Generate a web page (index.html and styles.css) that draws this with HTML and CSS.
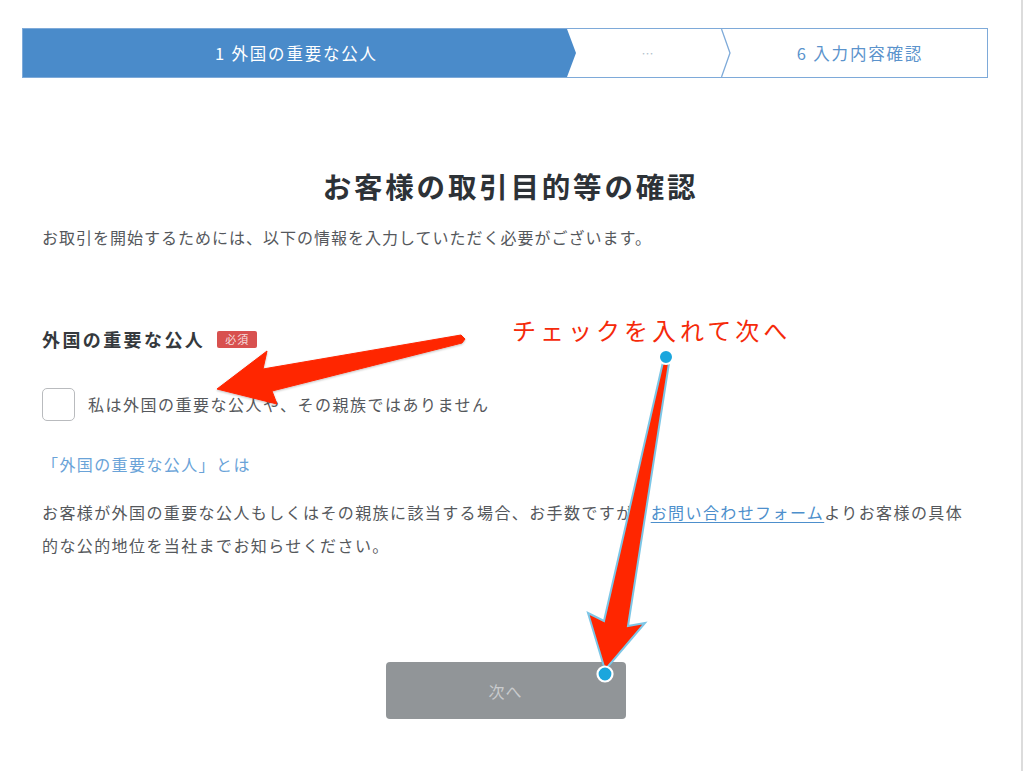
FILE: index.html
```html
<!DOCTYPE html>
<html lang="ja">
<head>
<meta charset="utf-8">
<title>お客様の取引目的等の確認</title>
<link rel="stylesheet" href="styles.css">
</head>
<body>
<div class="page">
  <div class="stepper">
    <div class="step step-active">1 外国の重要な公人</div>
    <div class="step step-mid">…</div>
    <svg class="chev" viewBox="0 0 10 48" preserveAspectRatio="none"><polyline points="0.5,0 9,24 0.5,48" fill="none" stroke="#7eaad9" stroke-width="1.3"/></svg>
    <div class="step step-last">6 入力内容確認</div>
  </div>

  <main class="content">
    <h1 class="title">お客様の取引目的等の確認</h1>
    <p class="lead">お取引を開始するためには、以下の情報を入力していただく必要がございます。</p>

    <div class="field-head">
      <span class="field-label">外国の重要な公人</span>
      <span class="badge">必須</span>
    </div>

    <label class="check-row">
      <span class="checkbox"></span>
      <span class="check-text">私は外国の重要な公人や、その親族ではありません</span>
    </label>

    <a class="info-link">「外国の重要な公人」とは</a>

    <p class="note"><span>お客様が外国の重要な公人もしくはその親族に該当する場合、お手数ですが、</span><a class="inline-link">お問い合わせフォーム</a><span>よりお客様の具体</span><span>的な公的地位を当社までお知らせください。</span></p>

    <div class="actions">
      <button class="next-btn" type="button">次へ</button>
    </div>
  </main>

  <div class="annotation-text">チェックを入れて次へ</div>

  <svg class="overlay" viewBox="0 0 1024 771" width="1024" height="771">
    <defs>
      <filter id="sh" x="-10%" y="-10%" width="120%" height="140%">
        <feDropShadow dx="0" dy="1" stdDeviation="1.2" flood-color="#000" flood-opacity="0.25"/>
      </filter>
    </defs>
    <polygon filter="url(#sh)" fill="#ff2600" stroke="#ff2600" stroke-width="1" stroke-linejoin="round"
      points="217,389 267,351 263,369 461,335 465,339 462,343 272,391 277,404"/>
    <polygon fill="#ff2600" stroke="#7cc6e6" stroke-width="2" stroke-linejoin="miter"
      points="663,362 669,363 628,626 645,623 605,670 588,613 604,621"/>
    <circle cx="666" cy="357" r="7" fill="#1ba6dd" stroke="#fff" stroke-width="2"/>
    <circle cx="605" cy="674" r="7.5" fill="#1ba6dd" stroke="#fff" stroke-width="2.2"/>
  </svg>
</div>
</body>
</html>
```

FILE: styles.css
```css
* { box-sizing: border-box; }

html, body {
  margin: 0;
  padding: 0;
  background: #ffffff;
}

body {
  font-family: "Noto Sans CJK JP", "Noto Sans", sans-serif;
  color: #4a4d52;
}

.page {
  position: relative;
  width: 1023px;
  height: 771px;
  border-right: 2px solid #dcdcdc;
  padding-top: 28px;
  overflow: hidden;
}

/* stepper */
.stepper {
  display: flex;
  margin-left: 22px;
  width: 966px;
  height: 50px;
  border: 1px solid #7eaad9;
}

.step {
  display: flex;
  align-items: center;
  justify-content: center;
  font-size: 16.5px;
  letter-spacing: 1.8px;
  height: 100%;
}

.step-active {
  width: 553px;
  background: #4a8bca;
  color: #ffffff;
  clip-path: polygon(0 0, calc(100% - 9px) 0, 100% 50%, calc(100% - 9px) 100%, 0 100%);
  padding-right: 6px;
}

.step-mid {
  width: 145px;
  color: #b3bfcc;
  font-size: 12px;
}

.chev {
  width: 10px;
  height: 100%;
  display: block;
}

.step-last {
  flex: 1;
  color: #5b93cc;
  padding-left: 2px;
}

/* content */
.content {
  padding: 0 42px;
}

.title {
  margin: 88px 0 0;
  text-align: center;
  font-size: 28.5px;
  line-height: 40px;
  letter-spacing: 2.8px;
  font-weight: 700;
  color: #2d3237;
}

.lead {
  margin: 19px 0 0;
  font-size: 16px;
  line-height: 24px;
  letter-spacing: 1px;
  color: #55585c;
}

.field-head {
  display: flex;
  align-items: center;
  margin-top: 77px;
  height: 26px;
}

.field-label {
  font-size: 18px;
  font-weight: 700;
  letter-spacing: 2.4px;
  color: #35393d;
}

.badge {
  margin-left: 12px;
  background: #d8514f;
  color: #f6dede;
  font-size: 11px;
  line-height: 17px;
  height: 17px;
  padding: 0 8px;
  border-radius: 2px;
  letter-spacing: 1px;
}

.check-row {
  display: flex;
  align-items: center;
  margin-top: 36px;
  height: 32px;
}

.checkbox {
  width: 33px;
  height: 33px;
  border: 1.5px solid #b9bbbe;
  border-radius: 5px;
  background: #fff;
  flex: none;
}

.check-text {
  margin-left: 13px;
  font-size: 16px;
  letter-spacing: 1.5px;
  color: #55585c;
}

.info-link {
  display: block;
  margin-top: 32px;
  font-size: 16px;
  line-height: 24px;
  letter-spacing: 1.4px;
  color: #6aa3d8;
}

.note {
  margin: 20px 0 0;
  font-size: 16px;
  line-height: 33px;
  letter-spacing: 1.4px;
  color: #55585c;
}

.inline-link {
  color: #4d8fcc;
  text-decoration: underline;
  text-underline-offset: 3px;
}

.actions {
  display: flex;
  justify-content: center;
  margin-top: 100px;
}

.next-btn {
  width: 240px;
  height: 57px;
  border: none;
  border-radius: 4px;
  background: #919598;
  color: #c9cbcd;
  font-family: inherit;
  font-size: 16px;
  letter-spacing: 1px;
  margin-right: 10px;
}

/* annotations */
.annotation-text {
  position: absolute;
  left: 512px;
  top: 313px;
  font-size: 24px;
  line-height: 34px;
  letter-spacing: 4px;
  color: #f52a0a;
}

.overlay {
  position: absolute;
  left: 0;
  top: 0;
  pointer-events: none;
}
```
